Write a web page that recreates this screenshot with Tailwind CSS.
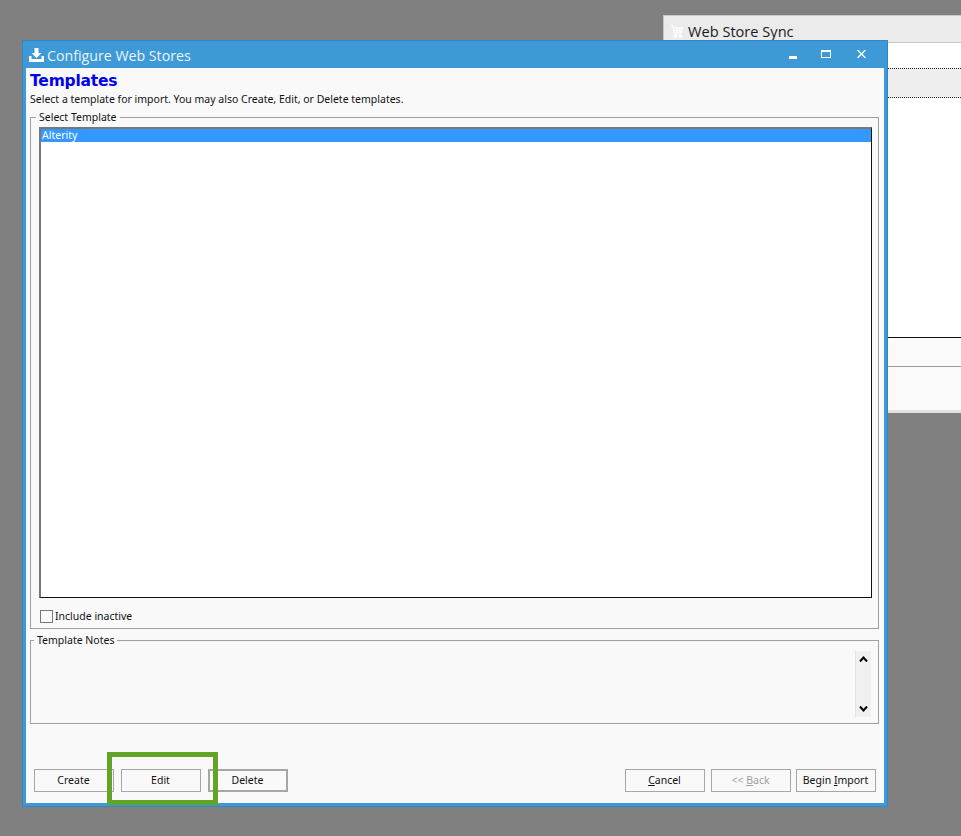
<!DOCTYPE html>
<html lang="en">
<head>
    <meta charset="UTF-8">
    <title>Configure Web Stores</title>
    <script src="https://cdn.jsdelivr.net/npm/@tailwindcss/browser@4"></script>
</head>
<body class="relative w-[961px] h-[836px] overflow-hidden bg-[#808080] font-['Noto_Sans','Open_Sans',sans-serif] text-[10.5px] text-[#111]">

    <!-- Window behind -->
    <div class="absolute left-[663px] top-[15px] w-[298px] h-[398px] flex flex-col bg-[#fafafa] border-t border-l border-[#c8c8c8]">
        <div class="h-[27px] shrink-0 flex items-center pl-[7px] bg-[#ebebeb] border-b border-[#c8c8c8]">
            <svg class="w-[13px] h-[13px] mr-[5px] mt-[4px]" viewBox="0 0 13 13" fill="none" stroke="#fff" stroke-width="1.2"><path d="M0 1h2l1 7h7l2-6M3 3h8M3.500 5.500h8M6 2v6M9 2v6"/><circle cx="4.500" cy="11" r="1.300" fill="#fff"/><circle cx="9.500" cy="11" r="1.300" fill="#fff"/></svg>
            <span class="font-['Open_Sans',sans-serif] text-[14.6px] leading-none mt-[5px] -ml-[1px] text-[#1a1a1a]">Web Store Sync</span>
        </div>
        <div class="h-[25px] shrink-0 bg-white"></div>
        <div class="h-[30px] shrink-0 bg-[#eeeeee] border-y border-dotted border-[#222]"></div>
        <div class="h-[240px] shrink-0 bg-white border-b border-[#111]"></div>
        <div class="h-[29px] shrink-0 border-b border-[#999]"></div>
        <div class="h-[43px] shrink-0"></div>
        <div class="flex-1 bg-[#e2e2e2]"></div>
    </div>

    <!-- Main window -->
    <div class="absolute left-[22px] top-[40px] w-[866px] h-[767px] flex flex-col bg-[#3e9ad6] border border-[#3585c0]">
        <div class="h-[27px] shrink-0 flex items-center text-white">
            <svg class="w-[15px] h-[14px] ml-[6px] mr-[3px] mt-[1px]" viewBox="0 0 15 14" fill="#fff"><path d="M5.500 0h4v5h3l-5 5-5-5h3z"/><path d="M0 8h2.500v3h10V8H15v6H0z"/></svg>
            <span class="font-['Open_Sans',sans-serif] text-[14.2px] leading-none mt-[4px] text-[#eaf4fb]">Configure Web Stores</span>
            <div class="ml-auto flex items-center -mt-[2px]">
                <span class="w-[8px] h-[3px] mt-[7px] bg-white"></span>
                <span class="w-[10px] h-[8px] ml-[24px] border border-t-2 border-white"></span>
                <svg class="w-[9px] h-[8px] ml-[26px] mr-[21px]" viewBox="0 0 9 8" fill="none" stroke="#fff" stroke-width="1.400"><path d="M.5 0l8 8M8.500 0l-8 8"/></svg>
            </div>
        </div>

        <div class="flex-1 min-h-0 mx-[3px] mb-[3px] flex flex-col bg-[#f9f9f9] px-[4px]">
            <h1 class="h-[24px] font-['DejaVu_Sans',sans-serif] font-bold text-[15.5px] leading-[26px] tracking-[-0.2px] text-[#0000f0]">Templates</h1>
            <p class="h-[16px] leading-[14px]">Select a template for import. You may also Create, Edit, or Delete templates.</p>

            <fieldset class="h-[518px] mt-[3px] mr-[1px] border border-[#a0a0a0] pl-[8px] pr-[6px] flex flex-col">
                <legend class="-ml-[3px] px-[3px] leading-[12px]">Select Template</legend>
                <div class="h-[471px] mt-[4px] bg-white border border-[#111] border-t-2 border-t-[#777] border-l-2 border-l-[#777]">
                    <div class="h-[13px] bg-[#3399ff] pl-[1px] leading-[13px] text-white">Alterity</div>
                </div>
                <label class="flex items-center mt-[12px] ml-[1px]">
                    <span class="w-[13px] h-[13px] border border-[#777] bg-[#f9f9f9]"></span>
                    <span class="ml-[2px] leading-[13px]">Include inactive</span>
                </label>
            </fieldset>

            <fieldset class="h-[90px] mt-[5px] mr-[1px] border border-[#a0a0a0] flex justify-end pr-[7px]">
                <legend class="ml-[3px] px-[3px] leading-[12px]">Template Notes</legend>
                <div class="w-[16px] h-[66px] mt-[5px] flex flex-col items-center justify-between py-[5px] bg-[#f0f0f0] border-l border-[#e4e4e4]">
                    <svg class="w-[9px] h-[6px]" viewBox="0 0 9 6" fill="none" stroke="#000" stroke-width="2"><path d="M1 5.500l3.500-4 3.500 4"/></svg>
                    <svg class="w-[9px] h-[6px]" viewBox="0 0 9 6" fill="none" stroke="#000" stroke-width="2"><path d="M1 .5l3.500 4 3.500-4"/></svg>
                </div>
            </fieldset>

            <div class="flex mt-[45px] pl-[4px] pr-[4px]">
                <button class="w-[80px] h-[23px] pr-[1px] border border-[#a6a6a6] text-center">Create</button>
                <button class="w-[80px] h-[23px] pr-[1px] ml-[7px] border border-[#a6a6a6] text-center">Edit</button>
                <button class="w-[80px] h-[23px] pr-[1px] ml-[7px] border-2 border-[#a6a6a6] text-center">Delete</button>
                <button class="w-[80px] h-[23px] pr-[1px] ml-auto border border-[#a6a6a6] text-center"><u>C</u>ancel</button>
                <button class="w-[80px] h-[23px] pr-[1px] ml-[6px] border border-[#a6a6a6] text-center text-[#a0a0a0]">&lt;&lt; <u>B</u>ack</button>
                <button class="w-[80px] h-[23px] pr-[1px] ml-[5px] border border-[#a6a6a6] text-center">Begin <u>I</u>mport</button>
            </div>
        </div>
    </div>

    <!-- Highlight over the Edit button -->
    <div class="absolute left-[107px] top-[752px] w-[111px] h-[53px] border-[5px] border-[#62a526]"></div>
</body>
</html>
